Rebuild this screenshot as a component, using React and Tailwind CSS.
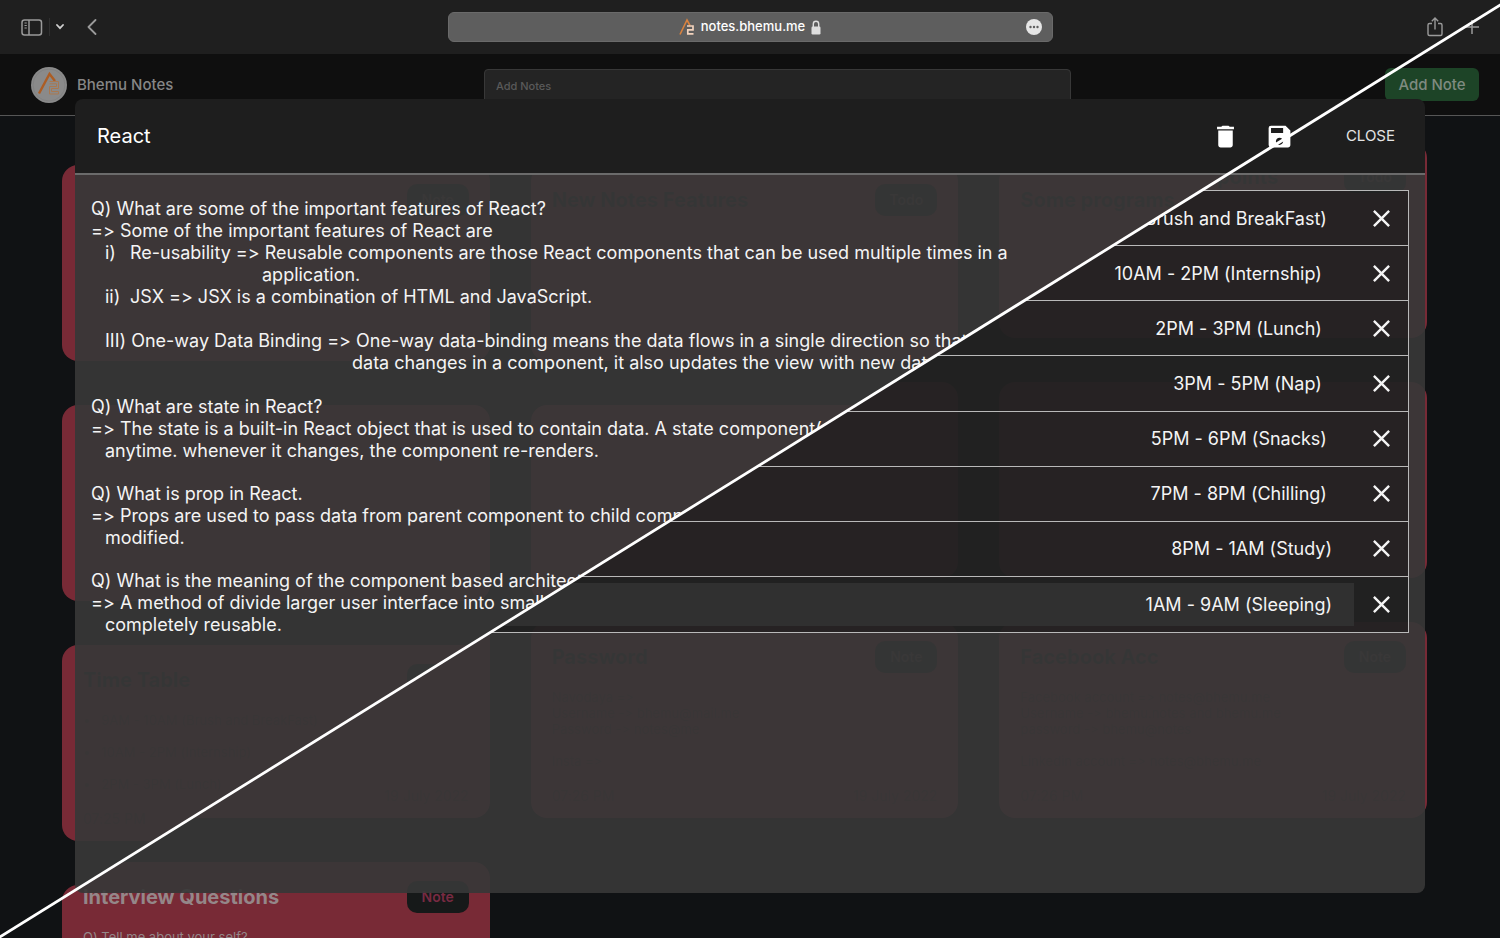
import React from "react";
import { MdDelete, MdSave, MdClose } from "react-icons/md";

const leftCards = [
  { title: "", tag: "Note" },
  { title: "New Notes Features", tag: "Todo" },
  { title: "Some programs", tag: "Todo" },
  {},
  {},
  {},
  {
    title: "Time Table",
    tag: "Todo",
    body: "\u2022   9AM - 10AM (Brush and BreakFast)\n\n\u2022   10AM - 2PM (Internship)\n\n\u2022   2PM - 3PM (Lunch)",
    time: "07:25 PM",
  },
  {},
  {},
  {},
];

const rightCards = [
  {},
  {},
  { title: "Some programming points", tag: "Todo" },
  {},
  {},
  {},
  { date: "19 July 2022" },
  {
    title: "Password",
    tag: "Note",
    body: "Navodaya =>\nUsername -> bhemu@mail.me\nPassword -> notes@me\n\nInsta =>",
    time: "07:26 PM",
    date: "19 July 2022",
  },
  {
    title: "Facebook Acc",
    tag: "Note",
    body: "Facebook account => notes@bhemu.me\nUsername -> bhemu.notes and bhemu.me\npassword -> bhemu@notes\n\nLinkedin account => notes@bhemu.me",
    time: "07:26 PM",
    date: "19 July 2022",
  },
  { title: "Interview Questions", tag: "Note", body: "Q) Tell me about your self?", open: true },
];

const tasks = [
  "9AM - 10AM (Brush and BreakFast)\u00a0",
  "10AM - 2PM (Internship)\u00a0\u00a0",
  "2PM - 3PM (Lunch)\u00a0\u00a0",
  "3PM - 5PM (Nap)\u00a0\u00a0",
  "5PM - 6PM (Snacks)\u00a0",
  "7PM - 8PM (Chilling)\u00a0",
  "8PM - 1AM (Study)",
  "1AM - 9AM (Sleeping)",
];

function NoteCard({ title, tag, body, time, date, open }) {
  return (
    <article
      className={`flex h-[196px] flex-col rounded-2xl bg-[#782a36] px-[21px] pt-[19px] pb-3 ${
        open ? "text-[#948789]" : "text-[#4c2c30]"
      }`}
    >
      <div className="flex h-8 shrink-0 items-center justify-between">
        <h2 className={`text-xl leading-8 font-bold ${open ? "" : "text-[#242828]"}`}>{title}</h2>
        {tag && (
          <span
            className={`flex h-8 w-[62px] items-center justify-center rounded-[10px] bg-[#161919] text-sm font-semibold ${
              open ? "text-[#782a42]" : "text-[#4a3e42]"
            }`}
          >
            {tag}
          </span>
        )}
      </div>
      <p className="mt-4 grow text-[13px] leading-4 whitespace-pre">{body}</p>
      <div className="flex shrink-0 justify-between text-sm leading-5">
        <span>{time}</span>
        <span>{date}</span>
      </div>
    </article>
  );
}

function CardGrid({ cards }) {
  return (
    <div className="grid grid-cols-3 gap-x-[41px] gap-y-11 pr-[73px] pl-[62px]">
      {cards.map((card, i) => (
        <NoteCard key={i} {...card} />
      ))}
    </div>
  );
}

function BrowserBar() {
  return (
    <div className="relative flex h-[54px] items-center justify-between bg-[#1f1f1f] px-[21px] text-[#9a9a9a]">
      <div className="flex items-center">
        <button aria-label="Sidebar">
          <svg width="22" height="17" viewBox="0 0 22 17" fill="none" stroke="currentColor" strokeWidth="1.500">
            <rect x="1" y="1" width="19.500" height="15" rx="2.500" />
            <path d="M8 1 V16" />
            <path d="M3.500 4 H5.800 M3.500 6.500 H5.800 M3.500 9 H5.800" strokeWidth="1.200" />
          </svg>
        </button>
        <span className="ml-1.5 h-[18px] w-px bg-[#303030]" />
        <button aria-label="Tab groups" className="ml-1.5 text-[#d0d0d0]">
          <svg width="8" height="6" viewBox="0 0 8 6" fill="none" stroke="currentColor" strokeWidth="1.800">
            <path d="M1 1 L4 4.200 L7 1" strokeLinecap="round" />
          </svg>
        </button>
        <button aria-label="Back" className="ml-[23px]">
          <svg width="10" height="16" viewBox="0 0 10 16" fill="none" stroke="currentColor" strokeWidth="1.800">
            <path d="M8.500 1 L1.500 8 L8.500 15" strokeLinecap="round" strokeLinejoin="round" />
          </svg>
        </button>
      </div>
      <div className="absolute inset-0 m-auto flex h-[30px] w-[605px] items-center justify-center rounded-md border border-[#6a6a6a] bg-[#5e5e5e]">
        <svg width="16" height="18" viewBox="0 0 16 18" className="mr-1.5" fill="none" aria-hidden="true">
          <path d="M1 16.500 L8 2 L11 7.500" stroke="#d9823f" strokeWidth="1.600" />
          <path d="M8 8 H14 V11.800 H8.800 V15.800 H14.500" stroke="#f3d3bd" strokeWidth="1.700" />
        </svg>
        <span className="text-[13px] font-medium text-white">notes.bhemu.me</span>
        <svg width="10" height="15" viewBox="0 0 10 15" className="ml-1.5" aria-hidden="true">
          <path d="M2.300 7 V4 a2.700 2.700 0 0 1 5.400 0 V7" fill="none" stroke="#dedede" strokeWidth="1.400" />
          <rect x="0.500" y="6.500" width="9" height="8" rx="1.200" fill="#dedede" />
        </svg>
        <button aria-label="Page menu" className="absolute right-[10px]">
          <svg width="16" height="16" viewBox="0 0 16 16">
            <circle cx="8" cy="8" r="8" fill="#e6e6e6" />
            <g fill="#5e5e5e">
              <circle cx="4.500" cy="8" r="1.200" />
              <circle cx="8" cy="8" r="1.200" />
              <circle cx="11.500" cy="8" r="1.200" />
            </g>
          </svg>
        </button>
      </div>
      <div className="flex items-center gap-[22px]">
        <button aria-label="Share">
          <svg width="16" height="20" viewBox="0 0 16 20" fill="none" stroke="currentColor" strokeWidth="1.400">
            <path d="M5 6.500 H2.500 A1.500 1.500 0 0 0 1 8 V17 A1.500 1.500 0 0 0 2.500 18.500 H13.500 A1.500 1.500 0 0 0 15 17 V8 A1.500 1.500 0 0 0 13.500 6.500 H11" />
            <path d="M8 12.500 V1.200 M4.800 4.200 L8 1 L11.200 4.200" />
          </svg>
        </button>
        <button aria-label="New tab">
          <svg width="14" height="14" viewBox="0 0 14 14" stroke="currentColor" strokeWidth="1.500">
            <path d="M7 0 V14 M0 7 H14" />
          </svg>
        </button>
      </div>
    </div>
  );
}

function SiteHeader() {
  return (
    <header className="relative flex h-[62px] items-center justify-between border-b border-[#565656] bg-[#0f0f0f] pr-[21px] pl-[31px]">
      <div className="flex items-center gap-2.5">
        <svg width="36" height="36" viewBox="0 0 36 36" fill="none" aria-hidden="true">
          <circle cx="18" cy="18" r="18" fill="#8a8a8a" />
          <circle cx="18" cy="18" r="16" stroke="#7c7c7c" strokeWidth="0.600" />
          <path d="M8 26.500 L18.500 7 L24 14" stroke="#ac5d24" strokeWidth="2.400" />
          <path
            d="M18.500 14.500 H27.500 V21.500 H20.500 V24.500 H27.500 V27 H18.500 V19.500 H25.500 V16.800 H18.500"
            stroke="#a87850"
            strokeWidth="1"
          />
        </svg>
        <span className="text-[15px] leading-6 font-medium text-[#868686]">Bhemu Notes</span>
      </div>
      <input
        aria-label="Add Notes"
        placeholder="Add Notes"
        className="absolute top-[15px] left-[484px] h-[34px] w-[587px] rounded-sm border border-[#383838] bg-[#242424] px-[11px] text-[11px] font-medium placeholder:text-[#5a5a5a]"
      />
      <button className="h-[33px] w-[94px] rounded-md bg-[#1d4427] text-[15px] leading-6 font-medium text-[#7f8b80]">
        Add Note
      </button>
    </header>
  );
}

function NoteText() {
  return (
    <div className="px-4 pt-[23px] text-lg leading-[22px] whitespace-nowrap text-[#f4f4f4]">
      <p>Q) What are some of the important features of React?</p>
      <p>=&gt; Some of the important features of React are</p>
      <div className="flex pl-3.5">
        <span className="w-[25px]">i)</span>
        <span>Re-usability =&gt; Reusable components are those React components that can be used multiple times in a</span>
      </div>
      <p className="pl-[171px]">application.</p>
      <div className="flex pl-3.5">
        <span className="w-[25px]">ii)</span>
        <span>JSX =&gt; JSX is a combination of HTML and JavaScript.</span>
      </div>
      <p className="mt-[22px] pl-3.5">
        III) One-way Data Binding =&gt; One-way data-binding means the data flows in a single direction so that w
      </p>
      <p className="pl-[261px]">data changes in a component, it also updates the view with new data.</p>
      <p className="mt-[22px]">Q) What are state in React?</p>
      <p>=&gt; The state is a built-in React object that is used to contain data. A state component(v</p>
      <p className="pl-3.5">anytime. whenever it changes, the component re-renders.</p>
      <p className="mt-[21px]">Q) What is prop in React.</p>
      <p>=&gt; Props are used to pass data from parent component to child component</p>
      <p className="pl-3.5">modified.</p>
      <p className="mt-[21px]">Q) What is the meaning of the component based architecture</p>
      <p>=&gt; A method of divide larger user interface into smaller</p>
      <p className="pl-3.5">completely reusable.</p>
    </div>
  );
}

function TaskList() {
  return (
    <ul className="mx-4 mt-[15px] grid h-[443px] grid-rows-8 divide-y divide-[#b9b9b9] border border-[#b9b9b9] bg-[#0b0b0b]/45">
      {tasks.map((task, i) => (
        <li key={task} className="flex items-center pl-1.5">
          <input
            aria-label={`Task ${i + 1}`}
            defaultValue={task}
            className={`h-[43px] min-w-0 grow pr-[22px] text-right text-lg text-[#f4f4f4] ${
              i === tasks.length - 1 ? "bg-[#303030]" : ""
            }`}
          />
          <button aria-label="Remove task" className="flex w-[54px] items-center justify-center text-[#f4f4f4]">
            <MdClose size={29} />
          </button>
        </li>
      ))}
    </ul>
  );
}

export default function App() {
  return (
    <div className="relative h-screen min-h-[640px] overflow-hidden bg-[#101214] font-['Inter','Liberation_Sans',sans-serif] [font-variant-ligatures:no-contextual]">
      <div className="absolute inset-0 overflow-hidden pt-[165px]">
        <CardGrid cards={leftCards} />
      </div>
      <div className="absolute inset-0 overflow-hidden bg-[#101214] pt-[142px] [clip-path:polygon(0_99.9%,100%_0.5%,100%_100%,0_100%)]">
        <CardGrid cards={rightCards} />
      </div>

      <BrowserBar />
      <SiteHeader />

      <section aria-label="React" className="absolute inset-x-[5%] top-[99px] bottom-[45px] overflow-hidden rounded-lg">
        <div className="flex h-[76px] items-center border-b-2 border-[#6b6b6b] bg-[#1e1e1e] px-[22px] text-white">
          <h1 className="grow text-xl">React</h1>
          <button aria-label="Delete">
            <MdDelete size={29} />
          </button>
          <button aria-label="Save" className="ml-[25px]">
            <MdSave size={29} />
          </button>
          <button className="mr-2 ml-[52px] text-[15px] leading-6 text-[#e4e4e4]">CLOSE</button>
        </div>
        <div className="h-full bg-[#373737]/92" />
      </section>

      <div className="absolute inset-0 overflow-hidden px-[5%] pt-[175px] [clip-path:polygon(0_0,100%_0,100%_0.5%,0_99.9%)]">
        <NoteText />
      </div>
      <div className="absolute inset-0 overflow-hidden px-[5%] pt-[175px] [clip-path:polygon(0_99.9%,100%_0.5%,100%_100%,0_100%)]">
        <TaskList />
      </div>

      <svg
        viewBox="0 0 1500 938"
        preserveAspectRatio="none"
        className="pointer-events-none absolute inset-0 size-full"
        aria-hidden="true"
      >
        <path d="M-5 940 L1505 2" stroke="#ffffff" strokeWidth="2.800" />
      </svg>
    </div>
  );
}
